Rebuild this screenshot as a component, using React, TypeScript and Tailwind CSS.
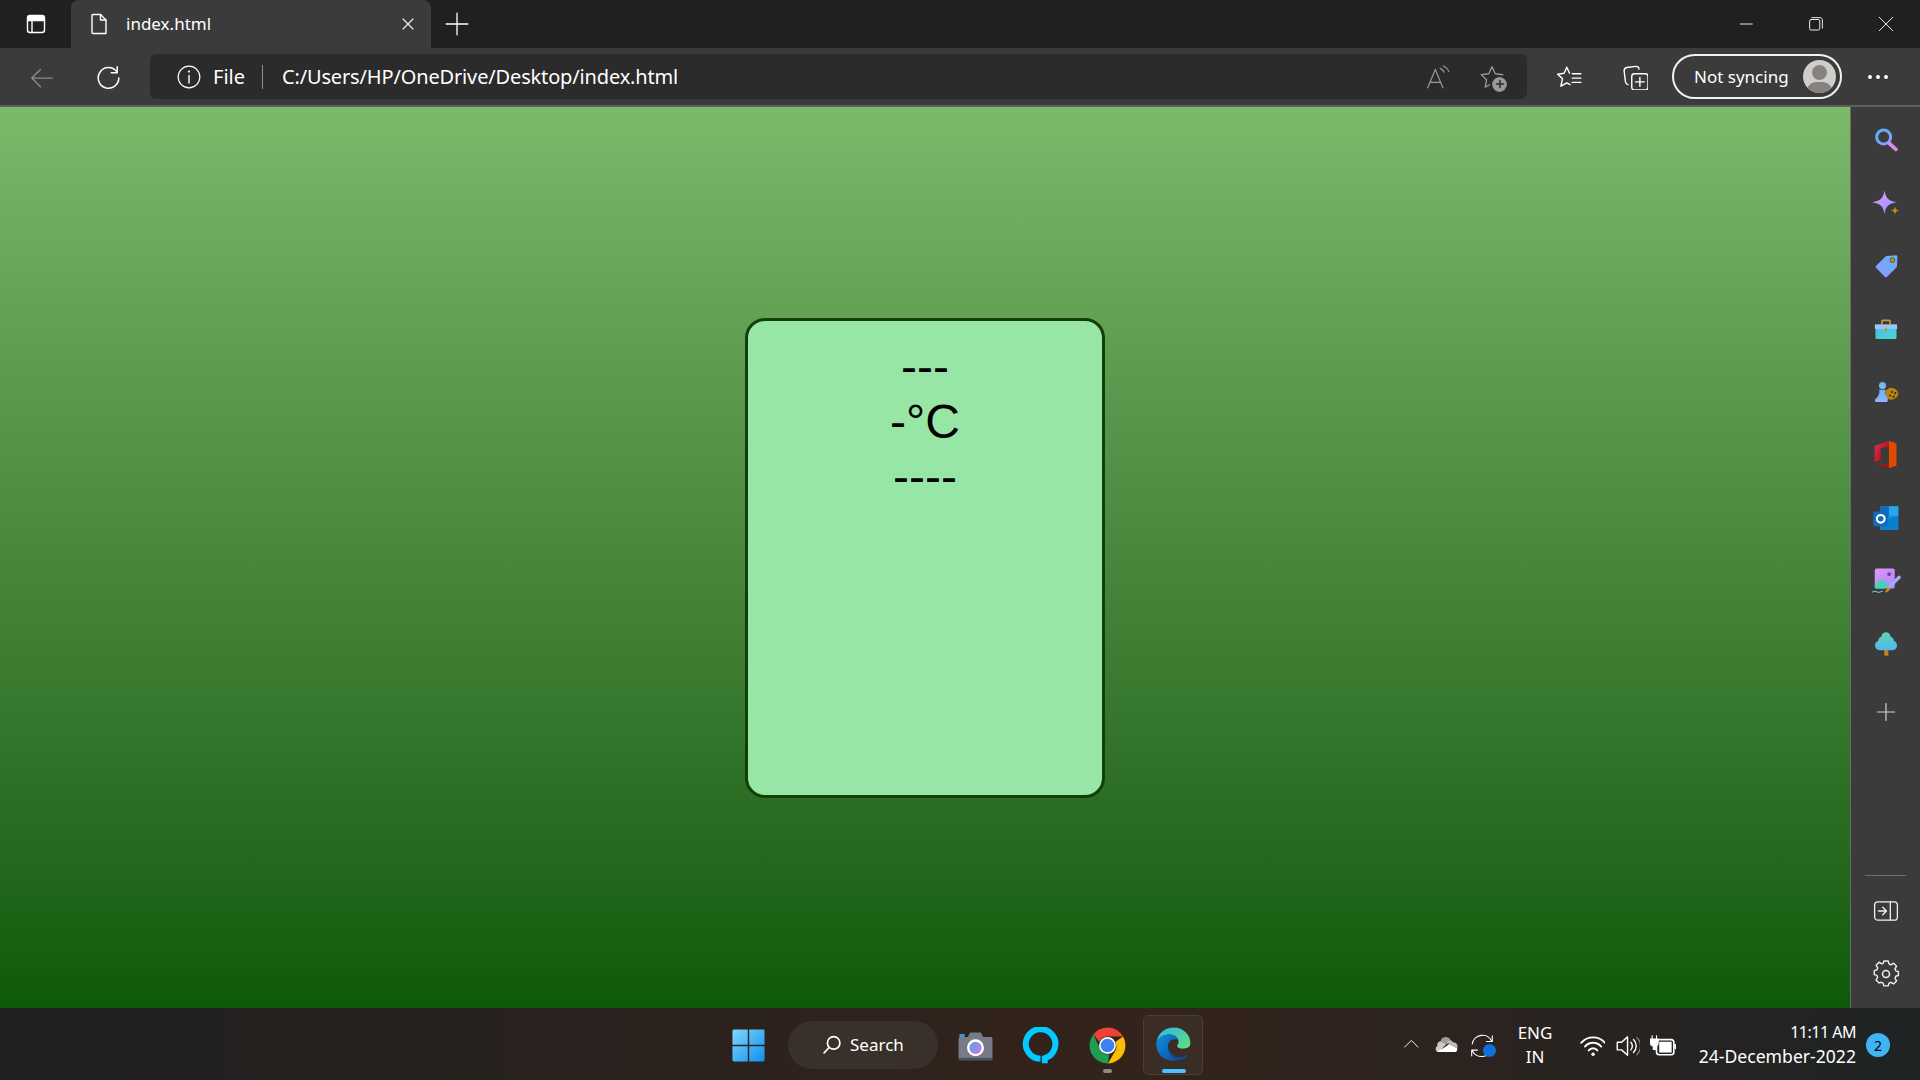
import type { ReactNode } from 'react'

const stroke = { fill: 'none', stroke: 'currentColor', strokeWidth: 1.4, strokeLinecap: 'round', strokeLinejoin: 'round' } as const

function Ico({ size = 24, children, className = '' }: { size?: number; children: ReactNode; className?: string }) {
  return (
    <svg width={size} height={size} viewBox="0 0 24 24" className={`block shrink-0 ${className}`}>
      {children}
    </svg>
  )
}

function SidebarItem({ children, className = 'h-[63px]' }: { children: ReactNode; className?: string }) {
  return <div className={`flex items-center justify-center ${className}`}>{children}</div>
}

function SidebarApps() {
  return (
    <div className="flex flex-col pt-[1px]">
      <SidebarItem>
        <Ico size={28}>
          <defs>
            <linearGradient id="sr" x1="0" y1="0" x2="1" y2="1"><stop offset="0" stopColor="#4fb4f5" /><stop offset="1" stopColor="#8f9cff" /></linearGradient>
          </defs>
          <circle cx="10" cy="9.500" r="6" fill="none" stroke="url(#sr)" strokeWidth="2.600" />
          <path d="M15 15l5.500 5" stroke="#d48cf0" strokeWidth="3.200" strokeLinecap="round" />
        </Ico>
      </SidebarItem>
      <SidebarItem>
        <Ico size={36}>
          <defs>
            <linearGradient id="sp" x1="0" y1="0" x2="1" y2="1"><stop offset="0" stopColor="#e09bff" /><stop offset="1" stopColor="#8d93ff" /></linearGradient>
          </defs>
          <path d="M11 3.500c.7 5 2.300 6.800 8 8-5.700 1.200-7.300 3-8 8-.7-5-2.300-6.800-8-8 5.700-1.200 7.300-3 8-8z" fill="url(#sp)" />
          <path d="M18 14c.3 2 .9 2.700 3 3-2.100.3-2.700 1-3 3-.3-2-.9-2.700-3-3 2.100-.3 2.700-1 3-3z" fill="#c68a12" />
        </Ico>
      </SidebarItem>
      <SidebarItem>
        <Ico size={28}>
          <defs>
            <linearGradient id="tg" x1="1" y1="0" x2="0" y2="1"><stop offset="0" stopColor="#5fb2f7" /><stop offset="1" stopColor="#8d9cff" /></linearGradient>
          </defs>
          <path d="M12.500 3.500l8-.8c.8 0 1.300.5 1.300 1.300l-.4 8c0 .5-.2.900-.5 1.200l-8 8c-.6.600-1.400.6-2 0l-7.300-7.500c-.6-.6-.6-1.400 0-2l7.800-7.700c.3-.3.600-.5 1.100-.5z" fill="url(#tg)" />
          <circle cx="17.500" cy="7" r="2" fill="#d98a00" stroke="#3a3a3a" strokeWidth=".6" />
        </Ico>
      </SidebarItem>
      <SidebarItem>
        <Ico size={28}>
          <defs>
            <linearGradient id="bx" x1="0" y1="0" x2="1" y2="1"><stop offset="0" stopColor="#4fb8f0" /><stop offset="1" stopColor="#45dccb" /></linearGradient>
          </defs>
          <path d="M8.500 8V5.500c0-.6.400-1 1-1h5c.6 0 1 .4 1 1V8" fill="none" stroke="#c8962a" strokeWidth="1.500" />
          <rect x="3" y="10" width="18" height="10.500" rx="1" fill="url(#bx)" />
          <rect x="2.500" y="8" width="19" height="4" fill="#9cc6f8" />
          <rect x="11" y="11" width="2" height="3" rx=".5" fill="#c8962a" />
        </Ico>
      </SidebarItem>
      <SidebarItem>
        <Ico size={28}>
          <defs>
            <linearGradient id="pw" x1="0" y1="0" x2="0" y2="1"><stop offset="0" stopColor="#5ab8f8" /><stop offset="1" stopColor="#9ab0ff" /></linearGradient>
          </defs>
          <circle cx="16.500" cy="13.500" r="5.200" fill="#b98413" />
          <rect x="13" y="9.500" width="9.500" height="8" rx="4" fill="#b98413" />
          <circle cx="17" cy="12" r=".9" fill="#3a2a08" /><circle cx="20" cy="13" r=".9" fill="#3a2a08" /><circle cx="15.500" cy="15" r=".9" fill="#3a2a08" /><circle cx="18.500" cy="16" r=".9" fill="#3a2a08" />
          <circle cx="9" cy="6.500" r="3" fill="url(#pw)" />
          <path d="M6.500 10h5l.5 1.300-1 .7c.3 2.500 1.200 4 2.500 5.200v2.300c0 .6-.4 1-1 1H3.500c-.6 0-1-.4-1-1v-1c1.800-1.200 3.500-3 4-7.500l-1-.7z" fill="url(#pw)" />
        </Ico>
      </SidebarItem>
      <SidebarItem>
        <Ico size={33}>
          <defs>
            <linearGradient id="of" x1="0" y1="0" x2="1" y2="1"><stop offset="0" stopColor="#d6336c" /><stop offset=".5" stopColor="#c4161c" /><stop offset="1" stopColor="#a01018" /></linearGradient>
          </defs>
          <path d="M14.500 2L5 5.500C4.300 5.800 4 6.300 4 7v10.500l4.500-1.700V7.500l6-1.500zM4.500 18.300l10 3.700v-2.500z" fill="url(#of)" />
          <path d="M14.500 2v20l4.600-1.600c.6-.2.900-.7.900-1.400V5c0-.7-.3-1.200-.9-1.400z" fill="#e24a00" />
        </Ico>
      </SidebarItem>
      <SidebarItem>
        <Ico size={28}>
          <rect x="7" y="2" width="15.500" height="20" rx="1.200" fill="#1490df" />
          <rect x="7" y="2" width="7.500" height="8" fill="#0f6cbd" />
          <rect x="14.500" y="2" width="8" height="8" fill="#28a8ea" />
          <path d="M7 13l7.500 0 8-3v12H7z" fill="#0a7fd0" />
          <rect x="1" y="6.500" width="13" height="12.500" rx="1.200" fill="#0f6cbd" />
          <circle cx="7.500" cy="12.700" r="3.300" fill="none" stroke="#fff" strokeWidth="1.800" />
        </Ico>
      </SidebarItem>
      <SidebarItem>
        <Ico size={30}>
          <defs>
            <linearGradient id="im" x1="0" y1="0" x2="1" y2="1"><stop offset="0" stopColor="#e394f7" /><stop offset="1" stopColor="#a78bfa" /></linearGradient>
          </defs>
          <rect x="3" y="2" width="16" height="16" rx="1.500" fill="url(#im)" />
          <circle cx="14.500" cy="6.500" r="1.500" fill="#7d3c98" />
          <path d="M3 15l5-5 6 5-3 3H4.500C3.500 18 3 17.500 3 16.500z" fill="#48d1b5" />
          <path d="M22.500 9l-8 8" stroke="#a5a8ff" strokeWidth="2.600" strokeLinecap="round" />
          <path d="M13.500 16.500l2 2-2.500 2.500h-2z" fill="#c8891a" />
          <path d="M1 21c2-1.500 3-.5 4.500 0s2.500-1 4-1" fill="none" stroke="#48d1b5" strokeWidth=".9" />
        </Ico>
      </SidebarItem>
      <SidebarItem>
        <Ico size={28}>
          <defs>
            <linearGradient id="tr" x1="0" y1="0" x2="0" y2="1"><stop offset="0" stopColor="#5fd0b0" /><stop offset="1" stopColor="#4fb9f2" /></linearGradient>
          </defs>
          <rect x="10.500" y="16" width="3.500" height="6" fill="#c48412" />
          <path d="M12 2c2.300 0 3.800 1.800 4 3.800 1.700.4 2.700 1.900 2.600 3.500 1.600.7 2.800 2.100 2.800 4 0 2.400-1.800 4-4 4H6.600c-2.200 0-4-1.600-4-4 0-1.900 1.200-3.300 2.800-4-.1-1.600.9-3.100 2.600-3.500C8.200 3.800 9.700 2 12 2z" fill="url(#tr)" />
        </Ico>
      </SidebarItem>
      <SidebarItem className="h-[73px] text-[#d4d4d4]">
        <Ico size={24}><path d="M12 3.500v17M3.500 12h17" {...stroke} strokeWidth={1.200} /></Ico>
      </SidebarItem>
    </div>
  )
}

function TopTabs() {
  return (
    <div className="flex h-[48px] items-stretch bg-[#202020] text-white">
      <div className="flex w-[71px] items-center justify-center pl-[1px]">
        <Ico size={24}>
          <rect x="3.500" y="3.500" width="17" height="17" rx="2.500" {...stroke} />
          <path d="M3.500 8.500h17M8 8.500v12" {...stroke} />
          <path d="M3.500 6c0-1.500 1-2.500 2.500-2.500h12c1.500 0 2.500 1 2.500 2.500v2.500h-17z" fill="currentColor" />
        </Ico>
      </div>
      <div className="flex w-[360px] items-center rounded-t-[8px] bg-[#3b3b3b] pl-[16px] pr-[13px]">
        <Ico size={24}><path d="M6 2.500h7.500L19 8v13.500H6c-.6 0-1-.4-1-1v-17c0-.6.400-1 1-1z" {...stroke} /><path d="M13.500 2.500V8H19" {...stroke} /></Ico>
        <span className="ml-[15px] text-[17px]">index.html</span>
        <div className="ml-auto text-[#e8e8e8]">
          <Ico size={20}><path d="M6 6l12 12M18 6L6 18" {...stroke} strokeWidth={1.500} /></Ico>
        </div>
      </div>
      <div className="ml-[13px] flex items-center">
        <Ico size={26}><path d="M13 3v20M3 13h20" {...stroke} strokeWidth={1.200} transform="translate(-1 -1)" /></Ico>
      </div>
      <div className="ml-auto flex items-center">
        <div className="flex w-[69px] justify-center"><Ico size={18}><path d="M3 12h16" {...stroke} strokeWidth={1.200} /></Ico></div>
        <div className="flex w-[69px] justify-center"><Ico size={18}><rect x="3.500" y="6" width="13.500" height="14" rx="2" {...stroke} strokeWidth={1.200} /><path d="M6.500 3.500h11c1.500 0 3 1.500 3 3v11" {...stroke} strokeWidth={1.200} /></Ico></div>
        <div className="flex w-[70px] justify-center pl-[1px]"><Ico size={18}><path d="M3 3l18 18M21 3L3 21" {...stroke} strokeWidth={1.200} /></Ico></div>
      </div>
    </div>
  )
}

function Toolbar() {
  return (
    <div className="flex h-[59px] items-start border-b-2 border-[#5f5f5f] bg-[#3b3b3b] pt-[6px] text-white">
      <div className="flex h-[45px] w-[150px] items-center">
        <div className="ml-[28px] text-[#8a8a8a]">
          <Ico size={26}><path d="M22.500 13H3.500M11.500 5l-8 8 8 8" {...stroke} strokeWidth={1.300} /></Ico>
        </div>
        <div className="ml-[41px]">
          <Ico size={26}><path d="M20 7a9.500 9.500 0 1 0 2 6" {...stroke} strokeWidth={1.400} /><path d="M20.500 2.500V8H15" {...stroke} strokeWidth={1.400} /></Ico>
        </div>
      </div>
      <div className="flex h-[45px] w-[1377px] items-center rounded-[6px] bg-[#2b2b2b] pl-[26px] pr-[22px]">
        <Ico size={26}><circle cx="12" cy="12" r="10" {...stroke} strokeWidth={1.100} /><path d="M12 10.500v7" {...stroke} strokeWidth={1.300} /><circle cx="12" cy="7" r="1" fill="currentColor" /></Ico>
        <span className="ml-[11px] text-[20px]">File</span>
        <span className="ml-[17px] h-[24px] w-[1px] bg-[#8f8f8f]" />
        <span className="ml-[19px] text-[20px] tracking-[-0.15px]">C:/Users/HP/OneDrive/Desktop/index.html</span>
        <div className="ml-auto text-[#9a9a9a]">
          <Ico size={26}>
            <path d="M2.500 22L9.500 5l7 17M5 17h9.500" {...stroke} strokeWidth={1.100} />
            <path d="M14 4c1.800.8 3 2 3.800 3.600M17 1.800c2.400 1.100 4 2.700 5 5" {...stroke} strokeWidth={1.100} />
          </Ico>
        </div>
        <div className="relative ml-[28px] text-[#9a9a9a]">
          <Ico size={26}><path d="M12 2.500L15 9l7 .8L17 14.500l1.300 7L12 18l-6.300 3.500 1.300-7L2 9.800 9 9z" {...stroke} strokeWidth={1.200} /></Ico>
          <span className="absolute bottom-[-2px] right-[-2px] flex h-[15px] w-[15px] items-center justify-center rounded-full bg-[#9a9a9a] text-[#2b2b2b] outline-2 outline-[#2b2b2b]">
            <Ico size={12}><path d="M12 5v14M5 12h14" {...stroke} strokeWidth={3} /></Ico>
          </span>
        </div>
      </div>
      <div className="flex h-[45px] items-center">
        <div className="ml-[29px]">
          <Ico size={26}>
            <path d="M12.500 8.500L10 3 7.500 8.500 1.500 9.500 6 13.500l-1.500 7 5.500-3 3 1.500" {...stroke} strokeWidth={1.300} />
            <path d="M15 9h8M15 13h8M15 17h8" {...stroke} strokeWidth={1.300} />
          </Ico>
        </div>
        <div className="ml-[40px]">
          <Ico size={26}><rect x="9" y="9" width="15" height="15" rx="2.500" {...stroke} strokeWidth={1.300} /><path d="M16.500 12.500v8M12.500 16.500h8" {...stroke} strokeWidth={1.300} /><path d="M5.500 19c-1.500-.3-2-1.300-2.300-2.500L2 6.500C1.800 4.800 2.700 3.500 4.500 3.200l8-1c1.800-.2 3 .7 3.200 2.500" {...stroke} strokeWidth={1.300} /></Ico>
        </div>
        <div className="ml-[24px] flex h-[45px] w-[170px] items-center rounded-full border-2 border-[#f2f2f2] pl-[20px] pr-[4px]">
          <span className="text-[17px]">Not syncing</span>
          <span className="relative ml-auto h-[33px] w-[33px] overflow-hidden rounded-full bg-[#cfcfca]">
            <span className="absolute left-[9px] top-[5px] h-[15px] w-[15px] rounded-full bg-[#85827f]" />
            <span className="absolute left-[3px] top-[22px] h-[22px] w-[27px] rounded-full bg-[#85827f]" />
          </span>
        </div>
        <div className="ml-[26px] flex gap-[4px]">
          <span className="h-[4px] w-[4px] rounded-full bg-white" />
          <span className="h-[4px] w-[4px] rounded-full bg-white" />
          <span className="h-[4px] w-[4px] rounded-full bg-white" />
        </div>
      </div>
    </div>
  )
}

function WeatherCard() {
  return (
    <div className="h-[480px] w-[360px] rounded-[20px] border-[3px] border-[#143f0b] bg-[#98e6a5] pt-[18px] text-center font-['Liberation_Sans',Arial,sans-serif] text-[48px] leading-[55px] text-black">
      <div>---</div>
      <div>-°C</div>
      <div>----</div>
    </div>
  )
}

function Sidebar() {
  return (
    <aside className="flex w-[70px] flex-col justify-between border-l border-[#6a6a6a] bg-[#3b3b3b] text-[#f0f0f0]">
      <SidebarApps />
      <div className="flex flex-col">
        <div className="mx-[14px] h-[1px] bg-[#6e6e6e]" />
        <SidebarItem className="h-[70px]">
          <Ico size={26}><rect x="1.500" y="3.500" width="21" height="17" rx="3" {...stroke} strokeWidth={1.200} /><path d="M16 3.500v17M5 12h7.500M9 8.500l3.500 3.500L9 15.500" {...stroke} strokeWidth={1.200} /></Ico>
        </SidebarItem>
        <SidebarItem className="mb-[6px] h-[56px]">
          <Ico size={28}>
            <path d="M10 2.500h4l.7 2.800 1.800.8 2.500-1.500 2.800 2.800-1.500 2.500.8 1.800 2.400.7v3.700l-2.400.7-.8 1.800 1.500 2.500-2.800 2.800-2.500-1.500-1.800.8-.7 2.500h-4l-.7-2.500-1.800-.8L5.500 23 2.700 20.200l1.500-2.500-.8-1.800L1 15.200v-3.700l2.400-.7.8-1.800L2.700 6.500 5.500 3.700 8 5.200l1.300-.5z" transform="translate(1 -1.500) scale(.92)" {...stroke} strokeWidth={1.300} />
            <circle cx="12" cy="12" r="3" {...stroke} strokeWidth={1.300} />
          </Ico>
        </SidebarItem>
      </div>
    </aside>
  )
}

function Taskbar() {
  return (
    <footer className="flex h-[72px] items-center bg-gradient-to-r from-[#1f2020] via-[#33231b] via-60% to-[#1f2324] pt-[2px] font-['Noto_Sans',sans-serif] text-white">
      <div className="ml-[731px]">
        <Ico size={35}>
          <defs>
            <linearGradient id="win" x1="0" y1="0" x2="1" y2="1"><stop offset="0" stopColor="#7fd8fb" /><stop offset="1" stopColor="#0f8ff0" /></linearGradient>
          </defs>
          <path d="M1 2c0-.6.400-1 1-1h9.500v10.500H1zM12.500 1H22c.6 0 1 .4 1 1v9.500H12.500zM1 12.500h10.500V23H2c-.6 0-1-.4-1-1zM12.500 12.500H23V22c0 .6-.4 1-1 1h-9.500z" fill="url(#win)" />
        </Ico>
      </div>
      <div className="ml-[22px] flex h-[48px] w-[150px] items-center rounded-full bg-[#3a302a] pl-[34px]">
        <Ico size={20}><circle cx="14" cy="9.500" r="7.500" {...stroke} strokeWidth={2} /><path d="M8.500 15L2.500 21.500" {...stroke} strokeWidth={2} /></Ico>
        <span className="ml-[8px] text-[17px]">Search</span>
      </div>
      <div className="ml-[19px]">
        <Ico size={37}>
          <defs>
            <linearGradient id="lens" x1="0" y1="0" x2="1" y2="1"><stop offset="0" stopColor="#4fa8f0" /><stop offset="1" stopColor="#d477d8" /></linearGradient>
          </defs>
          <path d="M1 7.500c0-.5.400-1 1-1h5L8.500 3.500h7L17 6.500h5c.6 0 1 .5 1 1v13c0 .6-.4 1-1 1H2c-.6 0-1-.4-1-1z" fill="#767b85" />
          <rect x="1" y="20" width="22" height="1.500" fill="#4d5159" />
          <rect x="1.500" y="4.500" width="3.500" height="2" rx=".6" fill="#2c9ee0" />
          <circle cx="12" cy="13.500" r="5.500" fill="#fff" />
          <circle cx="12" cy="13.500" r="4" fill="url(#lens)" />
        </Ico>
      </div>
      <div className="ml-[28px]">
        <Ico size={37}>
          <path d="M14.800 23.500V20.200A9.600 9.600 0 1 0 12 20.600" fill="none" stroke="#00caff" strokeWidth="3.900" />
        </Ico>
      </div>
      <div className="ml-[29px]">
        <Ico size={39}>
          <path d="M12 1a11 11 0 0 1 9.530 5.500H12a5.500 5.500 0 0 0-5.050 3.300L3.400 5.100A11 11 0 0 1 12 1z" fill="#ea4335" />
          <path d="M21.530 6.500A11 11 0 0 1 12.300 23l4.500-7.800a5.500 5.500 0 0 0 0-5.300z" fill="#fbbc04" />
          <path d="M12.300 23A11 11 0 0 1 3.400 5.100L7.700 15A5.500 5.500 0 0 0 13 17.400z" fill="#1f9d55" />
          <circle cx="12" cy="12" r="5.200" fill="#fff" />
          <circle cx="12" cy="12" r="4.200" fill="#3b82f0" />
        </Ico>
      </div>
      <div className="relative ml-[16px] flex h-[60px] w-[60px] items-center justify-center rounded-[6px] border border-[#4a3f38] bg-[#3a2d26]">
        <Ico size={38} className="mb-[3px]">
          <defs>
            <linearGradient id="eg" x1="0" y1="0" x2="1" y2="1"><stop offset="0" stopColor="#2fb6e8" /><stop offset="1" stopColor="#64e07a" /></linearGradient>
            <linearGradient id="eb" x1="0" y1="0" x2="1" y2="1"><stop offset="0" stopColor="#0f8fe0" /><stop offset="1" stopColor="#0c4e9e" /></linearGradient>
          </defs>
          <path d="M1.500 11C2.500 5 7 1.500 12.500 1.500c6 0 10.500 4.500 10.500 10 0 2.500-2 3.500-4.500 3.500-2 0-4-.7-4-1.800 0-.8 1-1 1-2.700 0-2.500-2.700-4.500-5.500-4.500C6.500 6 3 7.500 1.500 11z" fill="url(#eg)" />
          <path d="M1.500 11C3 7.500 6.500 6 10 6c2.500 0 5 1.500 5.300 3.500-2-1-5.300-.5-6.300 2.500-1 3.500 1 8 5.800 10.200-.9.300-1.800.3-2.800.3C5.500 22.500 1 17.500 1.500 11z" fill="url(#eb)" />
          <path d="M9 13c0 4 3.500 7.500 7.500 7.500 2 0 4-1 5.500-2.500-1.500 3-4 4.300-7.200 4.200C11 20.500 8.500 16.500 9 13z" fill="#0c4e9e" />
          <path d="M14.500 13.200c0 1.100 2 1.800 4 1.800 1.500 0 3-.4 3.800-1.400-.6 2.400-2.500 4.400-4.800 4.900-2.500.3-4.500-.8-5.300-3-.5-1.500.6-3 2.300-2.300z" fill="#3a2d26" />
        </Ico>
        <span className="absolute bottom-[1px] left-[18px] h-[4px] w-[24px] rounded-full bg-[#4cc2ff]" />
        <span className="absolute bottom-[1px] left-[-41px] h-[4px] w-[9px] rounded-full bg-[#8f8a86]" />
      </div>
      <div className="ml-[200px]">
        <Ico size={20}><path d="M2 14.500l8-8 8 8" {...stroke} strokeWidth={1.100} /></Ico>
      </div>
      <div className="ml-[10px]">
        <Ico size={26}>
          <path d="M7 8.500a5 5 0 0 1 9.300-1.200 4.200 4.200 0 0 1 2 1.500L11 12z" fill="#9c9c9c" />
          <path d="M4 13a4 4 0 0 1 3-4.500l5 3-6 6.500H3.500A3 3 0 0 1 4 13z" fill="#c9c9c9" />
          <path d="M12.500 9a5 5 0 0 1 6 .5 3.800 3.800 0 0 1 3.800 5.500l-7-4z" fill="#bdbdbd" />
          <path d="M5 18.500h15a3 3 0 0 0 2.300-3.500l-7.300-4z" fill="#ffffff" />
          <path d="M3.500 18c.5.400 1 .5 1.500.5h15c.9 0 1.700-.5 2.200-1.300L14 13z" fill="#ffffff" />
        </Ico>
      </div>
      <div className="relative ml-[10px]">
        <Ico size={26}>
          <path d="M3 11a9.500 9.500 0 0 1 18-2.500M21.500 3.500v5.300h-5.300" {...stroke} strokeWidth={1} />
          <path d="M21 15a9.500 9.500 0 0 1-18 2M2.500 22v-5.300h5.300" {...stroke} strokeWidth={1} />
        </Ico>
        <span className="absolute bottom-[1px] right-[-1px] h-[13px] w-[13px] rounded-full bg-[#0f6fdc]" />
      </div>
      <div className="ml-[15px] w-[50px] text-center text-[17px] leading-[24px]">
        <div>ENG</div>
        <div>IN</div>
      </div>
      <div className="ml-[19px]">
        <Ico size={26}>
          <path d="M2 10a14.500 14.500 0 0 1 22 0M5.500 13.500a9.700 9.700 0 0 1 15 0M9 17a5 5 0 0 1 8 0" {...stroke} strokeWidth={1.700} />
          <circle cx="13" cy="20.500" r="1.600" fill="currentColor" />
        </Ico>
      </div>
      <div className="ml-[9px]">
        <Ico size={26}>
          <path d="M3 9.500h4l5.500-5v17l-5.500-5H3z" {...stroke} strokeWidth={1.300} />
          <path d="M15.500 9.500a5 5 0 0 1 0 7M18 7a8.500 8.500 0 0 1 0 12" {...stroke} strokeWidth={1.300} />
          <path d="M21 5a11 11 0 0 1 0 16" {...stroke} strokeWidth={1.300} className="opacity-40" />
        </Ico>
      </div>
      <div className="ml-[10px]">
        <Ico size={26}>
          <path d="M2 6V3M6 6V3M.5 6.500h7V10a3 3 0 0 1-2.500 3v3H3v-3A3 3 0 0 1 .5 10z" fill="currentColor" stroke="currentColor" strokeWidth="1" />
          <rect x="6" y="7" width="16" height="14" rx="2.500" {...stroke} strokeWidth={1.500} />
          <rect x="8.500" y="9" width="11.500" height="10" fill="currentColor" />
          <rect x="22.500" y="11" width="2" height="5" rx="1" fill="currentColor" />
        </Ico>
      </div>
      <div className="ml-[22px] mb-[2px] flex w-[158px] flex-col items-end text-[17.6px] leading-[24px]">
        <div className="text-[16px] tracking-[-0.5px]">11:11 AM</div>
        <div className="whitespace-nowrap">24-December-2022</div>
      </div>
      <div className="ml-[10px] flex h-[24px] w-[24px] items-center justify-center rounded-full bg-[#3fb4f5] text-[14px] text-black">2</div>
    </footer>
  )
}

export default function App() {
  return (
    <div className="flex h-[1080px] w-[1920px] flex-col overflow-hidden bg-[#202020] font-['Noto_Sans',sans-serif]">
      <TopTabs />
      <Toolbar />
      <div className="flex h-[901px]">
        <main className="flex flex-1 items-center justify-center bg-gradient-to-b from-[#7bb96b] to-[#0e5909]">
          <WeatherCard />
        </main>
        <Sidebar />
      </div>
      <Taskbar />
    </div>
  )
}
